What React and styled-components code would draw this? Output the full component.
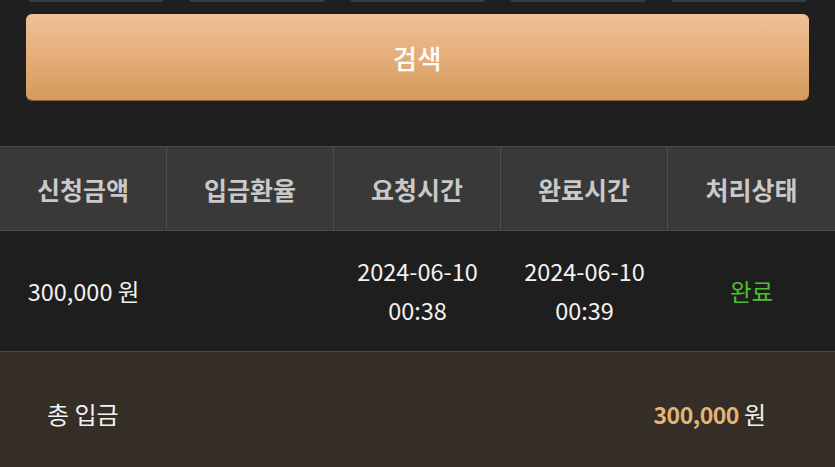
import styled, { createGlobalStyle } from "styled-components";

const GlobalStyle = createGlobalStyle`
  html, body {
    margin: 0;
    padding: 0;
    background: #1f1f1f;
    font-family: "Noto Sans CJK KR", "Noto Sans", sans-serif;
    overflow: hidden;
  }
`;

const Page = styled.div`
  width: 835px;
  min-height: 467px;
  background: #1f1f1f;
`;

// Filter inputs (page is scrolled, only their bottom edge shows)

const FilterRow = styled.div`
  display: flex;
  gap: 25px;
  padding: 0 28px;
  margin-top: -38px;
`;

const FilterBox = styled.div`
  flex: 1;
  height: 38px;
  background: #2a2a2a;
  border-bottom: 2px solid #3c3c3c;
  border-radius: 0 0 3px 3px;
`;

const SearchButton = styled.button`
  display: block;
  width: calc(100% - 52px);
  height: 86px;
  margin: 12px 26px 0;
  border: none;
  border-radius: 6px;
  background: linear-gradient(180deg, #efc197 0%, #e5ad7a 50%, #d49a5d 100%);
  box-shadow: 0 1px 0 #8a5f33;
  color: #fff;
  font-family: inherit;
  font-size: 26px;
  font-weight: 500;
  letter-spacing: 0.5px;
`;

// Table

const Table = styled.div`
  margin-top: 46px;
`;

const HeaderRow = styled.div`
  display: grid;
  grid-template-columns: repeat(5, 1fr);
  background: #393939;
  border-top: 1px solid #474747;
  border-bottom: 1px solid #4a4a4a;
`;

const HeaderCell = styled.div`
  height: 83px;
  display: flex;
  align-items: center;
  justify-content: center;
  color: #c9c9c9;
  font-size: 25px;
  font-weight: 700;
  border-right: 1px solid #4d4d4d;

  &:last-child {
    border-right: none;
  }
`;

const BodyRow = styled.div`
  display: grid;
  grid-template-columns: repeat(5, 1fr);
  background: #1e1e1e;
  border-bottom: 1px solid #4a4a4a;
`;

const BodyCell = styled.div`
  height: 120px;
  display: flex;
  flex-direction: column;
  align-items: center;
  justify-content: center;
  color: ${({ $color }) => $color || "#f2f2f2"};
  font-size: 23.5px;
  line-height: 39px;
`;

const Summary = styled.div`
  display: flex;
  align-items: center;
  justify-content: space-between;
  height: 122px;
  padding: 0 69px 0 47px;
  background: #342e27;
  color: #f2f2f2;
  font-size: 24px;
`;

const Amount = styled.span`
  color: #e3b577;
  font-weight: 600;
  font-size: 23px;
  letter-spacing: -0.5px;
  margin-right: 5px;
`;

const headers = ["신청금액", "입금환율", "요청시간", "완료시간", "처리상태"];

export default function App() {
  return (
    <Page>
      <GlobalStyle />
      <FilterRow>
        {[0, 1, 2, 3, 4].map((i) => (
          <FilterBox key={i} />
        ))}
      </FilterRow>
      <SearchButton>검색</SearchButton>

      <Table>
        <HeaderRow>
          {headers.map((h) => (
            <HeaderCell key={h}>{h}</HeaderCell>
          ))}
        </HeaderRow>
        <BodyRow>
          <BodyCell>300,000 원</BodyCell>
          <BodyCell />
          <BodyCell>
            <span>2024-06-10</span>
            <span>00:38</span>
          </BodyCell>
          <BodyCell>
            <span>2024-06-10</span>
            <span>00:39</span>
          </BodyCell>
          <BodyCell $color="#4cc02e">완료</BodyCell>
        </BodyRow>
        <Summary>
          <span>총 입금</span>
          <span>
            <Amount>300,000</Amount>원
          </span>
        </Summary>
      </Table>
    </Page>
  );
}
